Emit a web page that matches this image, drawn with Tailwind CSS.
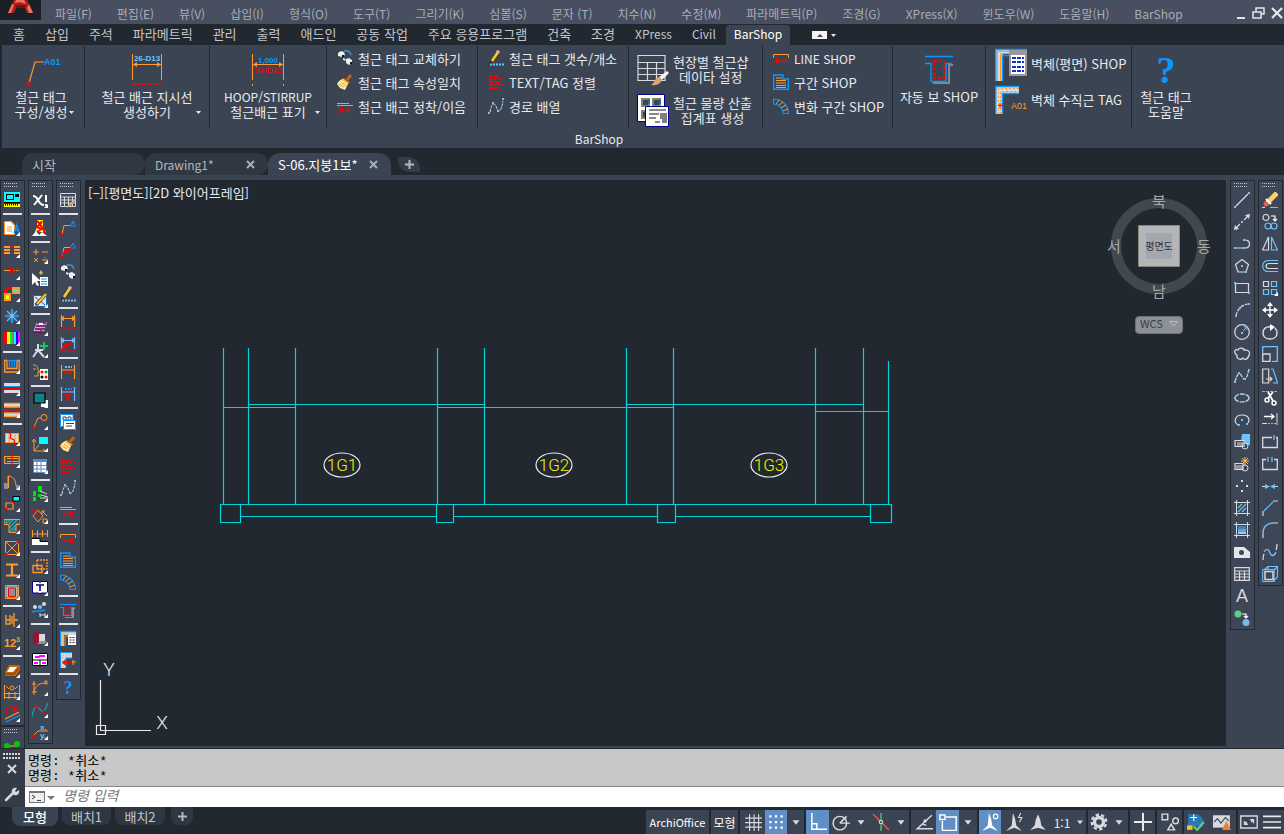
<!DOCTYPE html>
<html lang="ko">
<head>
    <meta charset="UTF-8">
    <meta name="viewport" content="width=device-width, initial-scale=1.0">
    <title>S-06.지붕1보 - BarShop</title>
    <script src="https://cdn.jsdelivr.net/npm/@tailwindcss/browser@4"></script>
</head>
<body class="h-screen flex flex-col overflow-hidden bg-[#3b4453] text-[13px] leading-[15px] text-[#e8eaed] font-['Noto_Sans_CJK_KR',sans-serif]">

    <!-- 메뉴 막대 -->
    <header class="flex h-6 shrink-0 items-start bg-[#474f60] text-[#a9adb5]">
        <a href="#" aria-label="AutoCAD" class="block h-5 w-[41px] shrink-0 bg-[#1b1f26]">
            <svg class="h-5 w-[41px]" viewBox="0 0 41 20">
                <path fill="#b3201c" d="M14 0h13l6 13h-6l-2-5h-9l-2 5H8z"/>
                <path fill="#f0705e" d="M12 4l2 1-3 8H8zM29 4l4 9h-4l-2-5zM16 0h8l2 4-6-2-5 1z"/>
                <path fill="#7a1110" d="M15 5h11l-1 3h-9z"/>
            </svg>
        </a>
        <nav id="menus" class="flex h-6 items-center gap-[25px] whitespace-nowrap pl-[14px] pt-[2px] text-[12px]"></nav>
        <div class="ml-auto flex h-6 items-center gap-[6px] pt-[2px]">
            <button aria-label="최소화"><svg width="10" height="12"><path fill="#e4e6ea" d="M1 10h8v2H1z"/></svg></button>
            <button aria-label="이전 크기로"><svg width="13" height="12"><path fill="none" stroke="#e4e6ea" stroke-width="1.500" d="M4 5V1h8v6H9M1 5h8v6H1z"/></svg></button>
            <button aria-label="닫기"><svg width="13" height="12"><path fill="none" stroke="#e4e6ea" stroke-width="2.200" d="M1 1l10 10M11 1L1 11"/></svg></button>
        </div>
    </header>

    <!-- 리본 탭 -->
    <nav id="ribbonTabs" class="flex h-[21px] shrink-0 items-end whitespace-nowrap bg-[#222830] pl-[3px] text-[#c3c6cc]"></nav>

    <!-- 리본 패널 -->
    <section class="h-[103px] shrink-0 border-l-2 border-[#222830] pt-px">
        <div class="flex h-[83px] whitespace-nowrap">
            <div class="flex w-[83px] justify-center border-r border-[#222830] pt-[7px]">
                <button class="flex flex-col items-center">
                    <svg width="36" height="34" class="mb-[2px]"><path fill="none" stroke="#ff9a2e" stroke-width="1.200" d="M4 30L10 9h9"/><circle cx="3.500" cy="31" r="1.800" fill="none" stroke="#f00" stroke-width="1.200"/><text x="19" y="12" font-size="9" font-weight="bold" fill="#0a96ff" font-family="Liberation Sans">A01</text></svg>
                    <span class="flex items-center pl-1"><span>철근 태그<br>구성/생성</span><span class="w-2 pl-[2px] pt-4"><svg width="5" height="3"><path fill="#e8eaed" d="M0 0h5L2.500 3z"/></svg></span></span>
                </button>
            </div>
            <div class="flex w-[125px] justify-center border-r border-[#222830] pt-[7px]">
                <button class="flex flex-col items-center">
                    <svg width="32" height="34" class="mb-[2px]"><path stroke="#ff9a2e" d="M1.500 1v26M30.500 1v26M2 11.500h28"/><path fill="#ff9a2e" d="M2 11.500l4-2.500v5zM30 11.500l-4-2.500v5z"/><path stroke="#f00" stroke-width="2" stroke-dasharray="2 1" d="M1 31h30"/><text x="16" y="8" text-anchor="middle" font-size="8" font-weight="bold" fill="#6ec3ff" font-family="Liberation Sans">26-D13</text></svg>
                    <span class="flex items-center pl-2"><span>철근 배근 지시선<br>생성하기</span><span class="w-2 pl-[3px] pt-4"><svg width="5" height="3"><path fill="#e8eaed" d="M0 0h5L2.500 3z"/></svg></span></span>
                </button>
            </div>
            <div class="flex w-[117px] justify-center border-r border-[#222830] pt-[7px]">
                <button class="flex flex-col items-center">
                    <svg width="34" height="34" class="mb-[2px]"><path stroke="#ff9a2e" d="M1.500 1v26M1.500 31v2M32.500 1v26M32.500 31v2M2 11.500h30"/><path fill="#ff9a2e" d="M2 11.500l4-2.500v5zM32 11.500l-4-2.500v5z"/><text x="17" y="10" text-anchor="middle" font-size="8" font-weight="bold" fill="#0a96ff" font-family="Liberation Sans">1,000</text><text x="17" y="20" text-anchor="middle" font-size="8" fill="#f00" font-family="Liberation Sans">3-HD13</text></svg>
                    <span class="flex items-center pl-2"><span><span class="text-[12px]">HOOP/STIRRUP</span><br>철근배근 표기</span><span class="w-2 pl-[3px] pt-4"><svg width="5" height="3"><path fill="#e8eaed" d="M0 0h5L2.500 3z"/></svg></span></span>
                </button>
            </div>
            <div data-rows="a" class="w-[151px] border-r border-[#222830] pl-[10px]"></div>
            <div data-rows="b" class="w-[151px] border-r border-[#222830] pl-[10px]"></div>
            <div class="w-[134px] border-r border-[#222830] pl-[8px] pt-[2px]">
                <button class="flex h-[41px] items-center gap-1">
                    <svg width="32" height="34"><path fill="none" stroke="#d8dadd" stroke-width="1.200" d="M1 3.500h27v25H1zM1 10.500h27M1 16.500h27M1 22.500h27M10.500 10.500v18M19.500 10.500v18"/><path fill="#f4f4f4" d="M30 19l2 2-7 7-3-3z"/><path fill="#d9a56b" d="M22 25l3 3c-2 5-8 6-11 5 4-2 3-7 8-8z"/></svg>
                    <span>현장별 철근샵<br>데이타 설정</span>
                </button>
                <button class="flex h-[41px] items-center gap-1">
                    <svg width="32" height="34"><path fill="#fff" stroke="#00008c" d="M.5 1.500h27v27H.500z"/><path fill="#808080" d="M4 5h9v9H4zM15 5h9v9h-9zM4 17h9v9H4z"/><path fill="#3b4453" d="M6 7h5v5H6zM17 7h5v5h-5zM6 19h5v5H6z"/><path fill="#0a8080" d="M11 6h2v5h-2zM22 6h2v5h-2z"/><path fill="#fff" stroke="#00008c" d="M8.500 13.500h23v20h-23z"/><path stroke="#888" stroke-width="2" d="M12 17h17M12 21h10M12 25h7M18 29h5"/><path fill="#808080" d="M23 20h7v10h-5v-4h-2z"/></svg>
                    <span>철근 물량 산출<br>집계표 생성</span>
                </button>
            </div>
            <div data-rows="c" class="w-[130px] border-r border-[#222830] pl-[10px]"></div>
            <div class="flex w-[93px] justify-center border-r border-[#222830] pt-[7px]">
                <button class="flex flex-col items-center self-start">
                    <svg width="30" height="34" class="mb-[2px]"><path fill="none" stroke="#888" stroke-width="2" d="M29 12h-4v18H9"/><path fill="none" stroke="#0a96ff" stroke-width="1.300" d="M1 3.500h28M1 10.500h6v18h15v-18h6"/><path fill="none" stroke="#f00" stroke-width="2" stroke-dasharray="3 2" d="M10 8h10v17H10z"/></svg>
                    <span>자동 보 SHOP</span>
                </button>
            </div>
            <div class="w-[146px] border-r border-[#222830] pl-[9px]">
                <button class="flex h-[35px] items-center gap-1">
                    <svg width="32" height="34"><path fill="#d8dadd" d="M0 2h32v5H8v27H0z"/><path fill="none" stroke="#0a96ff" stroke-width="1.500" d="M.700 34V2.500H32M7.500 34V8.500h8"/><path fill="none" stroke="#ff9a2e" d="M2.500 34V4.500h12M5.500 34V6.500h9"/><path fill="#fff" stroke="#999" stroke-width="2" d="M15 5h16v23H15z"/><path fill="#999" d="M14 3h18v5H14z"/><path stroke="#1030d0" stroke-width="2" stroke-dasharray="4 1" d="M17 11h12M17 15h12M17 20h12M17 24h12"/></svg>
                    <span>벽체(평면) SHOP</span>
                </button>
                <button class="flex h-[37px] items-center gap-1">
                    <svg width="32" height="30"><path fill="#d8dadd" d="M0 1h24v7H8v21H0z"/><path fill="none" stroke="#0a96ff" stroke-width="1.500" d="M.700 29V1.500H24M7.500 29V8.500H24"/><path fill="none" stroke="#ff9a2e" stroke-dasharray="2 2" d="M3.500 29V3.500H24M5.500 29V6.500H24"/><path fill="none" stroke="#f00" d="M3 20.500h13M5 18v5M8 18v5"/><text x="16" y="24" font-size="9" fill="#ff9a2e" font-family="Liberation Sans">A01</text></svg>
                    <span>벽체 수직근 TAG</span>
                </button>
            </div>
            <div class="flex w-[68px] justify-center pt-[7px]">
                <button class="flex flex-col items-center self-start">
                    <svg width="30" height="34" class="mb-[2px]"><text x="15" y="30" text-anchor="middle" font-size="38" font-weight="bold" fill="#0a96ff" font-family="Liberation Serif">?</text></svg>
                    <span>철근 태그<br>도움말</span>
                </button>
            </div>
        </div>
        <p class="w-[1194px] pt-[2px] text-center text-[12px]">BarShop</p>
    </section>

    <!-- 파일 탭 -->
    <nav class="flex h-[27px] shrink-0 items-end bg-[#222830] pl-[22px] text-[#b4b8bf]">
        <a href="#" class="flex h-[22px] w-[123px] items-center rounded-t-xl rounded-br-xl bg-[#2f3743] pl-[10px]">시작</a>
        <a href="#" class="flex h-[22px] w-[123px] items-center justify-between rounded-t-xl rounded-br-xl bg-[#2f3743] pl-[10px] pr-[13px] text-[12px]">Drawing1*
            <svg width="9" height="9"><path stroke="#a9adb5" stroke-width="2" d="M1 1l7 7M8 1L1 8"/></svg></a>
        <a href="#" class="flex h-[22px] w-[123px] items-center justify-between rounded-t-xl bg-[#3b4453] pl-[10px] pr-[13px] text-white">S-06.지붕1보*
            <svg width="9" height="9"><path stroke="#a9adb5" stroke-width="2" d="M1 1l7 7M8 1L1 8"/></svg></a>
        <button aria-label="새 도면" class="mb-[3px] ml-[7px] flex h-[15px] w-[22px] items-center justify-center rounded-tr-xl rounded-bl-xl bg-[#343c49]"><svg width="9" height="9"><path stroke="#b4b8bf" stroke-width="2" d="M4.500 0v9M0 4.500h9"/></svg></button>
    </nav>

    <!-- 작업 영역 -->
    <main class="flex min-h-0 flex-1 overflow-hidden pt-[5px] pb-[2px]">
        <div class="flex shrink-0 items-start gap-[3px] pr-1">
            <div>
                <div data-bar="l1" class="w-[25px] border border-[#222830] bg-[#3e4757]"></div>
                <div data-bar="l1b" class="w-[25px] border border-[#222830] bg-[#3e4757]"></div>
            </div>
            <div data-bar="l2" class="w-[25px] border border-[#222830] bg-[#3e4757]"></div>
            <div data-bar="l3" class="w-[25px] border border-[#222830] bg-[#3e4757]"></div>
        </div>

        <div class="relative min-w-0 flex-1 overflow-hidden bg-[#222830]">
            <p class="px-[3px] pt-[5px]">[−][평면도][2D 와이어프레임]</p>

            <svg class="absolute top-0 left-0 h-full w-full" aria-label="평면도">
                <g fill="none" stroke="#00d5dc" stroke-width="1.200">
                    <path d="M138.500 168v156M163.500 168v156M210.500 168v156M352.500 168v156M399.500 168v156M541.500 168v156M588.500 168v156M730.500 168v156M778.500 168v156M803.500 181v143"/>
                    <path d="M138 227.500h73M163 224.500h237M352 227.500h237M541 224.500h238M730 231.500h74"/>
                    <path d="M135 324.500h672M156 336.500h195M369 336.500h203M590 336.500h195"/>
                    <path d="M135.500 324.500h20v18h-20zM351.500 324.500h17v18h-17zM572.500 324.500h18v18h-18zM785.500 324.500h21v18h-21z"/>
                </g>
                <g fill="none" stroke="#e8eaed" stroke-width="1.200">
                    <ellipse cx="257" cy="285" rx="18" ry="12"/>
                    <ellipse cx="469" cy="285" rx="18" ry="12"/>
                    <ellipse cx="684" cy="285" rx="18" ry="12"/>
                </g>
                <g fill="#f4f400" font-size="17" font-weight="300" text-anchor="middle" font-family="Roboto">
                    <text x="257" y="291">1G1</text>
                    <text x="469" y="291">1G2</text>
                    <text x="684" y="291">1G3</text>
                </g>
            </svg>

            <!-- 뷰큐브 -->
            <div class="absolute top-[10px] right-[14px] flex flex-col items-center">
                <svg width="106" height="116">
                    <circle cx="53" cy="56" r="43" fill="none" stroke="#43484f" stroke-width="10"/>
                    <path fill="#b4b5b7" stroke="#8a8678" d="M32.500 35.500h41v41h-41z"/>
                    <path fill="#a3a7b0" d="M40 43h26v26H40z"/>
                    <text x="53" y="60" text-anchor="middle" font-size="10" fill="#33373d">평면도</text>
                    <g fill="#a6a8ab" font-size="15" text-anchor="middle"><text x="53" y="17">북</text><text x="8" y="62">서</text><text x="98" y="62">동</text><text x="53" y="107">남</text></g>
                </svg>
                <button class="mt-[10px] flex h-[18px] w-12 items-center justify-between rounded border border-[#6d7179] bg-[#8c9099] px-1 pb-[3px] text-[11px] text-[#3c4048]">WCS
                    <svg width="9" height="6"><path fill="none" stroke="#b8bcc4" d="M.5 .5h8L4.500 5z"/></svg></button>
            </div>

            <!-- UCS 아이콘 -->
            <svg class="absolute bottom-[6px] left-2" width="80" height="84">
                <path fill="none" stroke="#e8eaed" stroke-width="1.200" d="M7.500 24v50.500H58M3.500 69.500h9v9h-9z"/>
                <g fill="#e8eaed" font-size="19" font-weight="300" font-family="Roboto" text-anchor="middle"><text x="16" y="20">Y</text><text x="69" y="73">X</text></g>
            </svg>
        </div>

        <div class="flex shrink-0 items-start gap-[3px] pr-px pl-1">
            <div data-bar="r1" class="w-[25px] border border-[#222830] bg-[#3e4757]"></div>
            <div data-bar="r2" class="w-[25px] border border-[#222830] bg-[#3e4757]"></div>
        </div>
    </main>

    <!-- 명령행 -->
    <section class="flex h-[59px] shrink-0 border-t border-[#222830]">
        <div class="flex w-[25px] shrink-0 flex-col items-center bg-[#343b47] pt-1 pr-[2px]">
            <svg width="18" height="6"><path stroke="#d8dadd" stroke-width="2" stroke-dasharray="2 1" d="M0 1h18M0 5h18"/></svg>
            <button aria-label="명령행 닫기" class="mt-[5px]"><svg width="10" height="10"><path stroke="#d8dadd" stroke-width="2" d="M1 1l8 8M9 1L1 9"/></svg></button>
            <button aria-label="사용자화" class="mt-3"><svg width="16" height="16"><path stroke="#d8dadd" stroke-width="2.500" stroke-linecap="round" d="M2 14l7-7"/><path fill="#d8dadd" d="M8 7c-1-3 1-6 5-5l-2 3 1 1 3-2c1 4-2 6-5 5z"/></svg></button>
        </div>
        <div class="flex min-w-0 flex-1 flex-col">
            <div class="h-[37px] bg-[#c8c8c8] pt-[5px] pl-[3px] text-black font-['Liberation_Mono','Noto_Sans_CJK_KR',monospace]">
                <p>명령: *취소*</p>
                <p>명령: *취소*</p>
            </div>
            <div class="flex h-[21px] items-center border-t border-[#888] bg-white pl-1">
                <svg width="30" height="14"><path fill="#eee" stroke="#777" d="M.5 1.500h15v11H.500z"/><path fill="#777" d="M0 1h16v2H0zM18 6h8l-4 4z"/><path fill="none" stroke="#444" d="M3 5l3 2-3 2M8 10.500h4"/></svg>
                <label for="cmd" class="sr-only">명령</label>
                <input id="cmd" type="text" placeholder="명령 입력" class="mb-1 h-4 flex-1 pl-1 text-[14px] text-black italic outline-none placeholder:text-[#777]">
            </div>
        </div>
    </section>

    <!-- 상태 막대 -->
    <footer class="flex h-[27px] shrink-0 items-start justify-between bg-[#222830]">
        <nav class="flex pl-3 text-[#c3c6cc]">
            <a href="#" class="flex h-[19px] w-[46px] items-center justify-center rounded-b-lg bg-[#3b4453] font-medium text-white">모형</a>
            <a href="#" class="ml-1 flex h-[18px] w-[49px] items-center justify-center rounded-b-lg bg-[#2f3743]">배치1</a>
            <a href="#" class="ml-1 flex h-[18px] w-[50px] items-center justify-center rounded-b-lg bg-[#2f3743]">배치2</a>
            <button aria-label="새 배치" class="ml-[6px] flex h-[18px] w-[22px] items-center justify-center rounded-b-lg bg-[#2f3743]"><svg width="9" height="9"><path stroke="#b4b8bf" stroke-width="2" d="M4.500 0v9M0 4.500h9"/></svg></button>
        </nav>
        <div id="status" class="flex h-[27px] items-stretch gap-[2px] pt-[3px] text-[12px]"></div>
    </footer>

<script>
const O = '#ff9a2e', B = '#0a96ff', L = '#6ec3ff', R = '#f00', W = '#d8dadd', G = '#8d9096';
const s = (c, d, w = 1) => `<path fill="none" stroke="${c}" stroke-width="${w}" d="${d}"/>`;
const f = (c, d) => `<path fill="${c}" d="${d}"/>`;
const dash = (c, d, w = 1, p = '2 1') => `<path fill="none" stroke="${c}" stroke-width="${w}" stroke-dasharray="${p}" d="${d}"/>`;
const c = (col, x, y, r, w = 1) => `<circle cx="${x}" cy="${y}" r="${r}" fill="none" stroke="${col}" stroke-width="${w}"/>`;
const dot = (col, x, y, r = 1.5) => `<circle cx="${x}" cy="${y}" r="${r}" fill="${col}"/>`;
const t = (col, x, y, size, str) => `<text x="${x}" y="${y}" font-size="${size}" font-weight="bold" fill="${col}" font-family="Liberation Sans">${str}</text>`;
const FLY = f('#fff', 'M16 12v4h-4z');
const svg = (body, n = 16) => `<svg width="${n}" height="${n}" viewBox="0 0 16 16">${body}</svg>`;

// shared glyphs
const swap = f('#e8f0f4', 'M1 3l3-2 3 1 1 3-3 2-4-1zM9 9l3-1 3 2v3l-3 2-3-2z') + f('#111', 'M5 5h2v2H5zM13 12h2v2h-2z') + s('#4a90c8', 'M7 1c4-1 6 1 7 4', 1.5) + f(W, 'M6 8l3 1-1 2-2-1z');
const pencil = s('#5a4010', 'M4 12L11 1', 4) + s('#f5c838', 'M4 11L10 2', 2.5) + f('#f0a0a0', 'M9 0l3 1-1 3-3-2z') + f('#222', 'M2 11l2 2-3 2z') + dash(L, 'M2 14.5h14', 2);
const brush = s('#c06010', 'M10 6l4-5', 3) + f('#ffe9a0', 'M2 7l5-3 5 4-4 8-5-2-3-4z') + s(O, 'M4 8l5 4M2 10l5 3M6 6l5 4') + s('#b05800', 'M6 4l7 5', 1.5);
const anchor = s(O, 'M0 5.500h12M0 7.500h16') + s(R, 'M3.500 9v6M12.500 9v6M4 12h8M6 10l-2 2 2 2M10 10l2 2-2 2');
const bricks = dash(R, 'M1 2h10', 2, '4 1') + dash(R, 'M1 5h14', 2, '3 1') + dash(R, 'M1 8h12', 2, '5 1') + dash(R, 'M1 11h14', 2, '3 1') + dash(R, 'M1 14h10', 2, '4 1');
const path = dash(W, 'M2 14c1-5 2-8 4-8s3 7 5 7 3-5 4-10', 1, '3 1') + f(L, 'M0 14h2v2H0zM4 4h2v2H4zM9 12h2v2H9zM14 0h2v2h-2z');
const lineShop = s(O, 'M.5 8V4.500h15V8') + s(R, 'M3.500 8v6M12.500 8v6M4 11h8M6 9l-2 2 2 2M10 9l2 2-2 2');
const zone = s(B, 'M.7 1h9.300v4h5.300v10.300H.700z', 1.400) + s(O, 'M3 4h6M3 6.500h10M3 9h10M3 11.500h10M3 13.500h10');
const curve = s(B, 'M.5 6V1C9 1 15 7 15.500 15.500H10C10 10 6 6 .5 6z', 1.200) + s(O, 'M3 6l3-4M6 7l4-3M8 10l5-3M10 13l5-2');
const grid = s(W, 'M.5 1.500h15v13H.500zM.5 5h15M.5 8h15M.5 11h15M4.500 5v9M8.500 5v9M12.500 5v9');
const brushTip = f('#d9a56b', 'M10 11l5-4 1 1-4 5-5 3z');
const leaderA = s(O, 'M2 14L4 5.500h6') + c(R, 1.500, 14.5, 1) + s(B, 'M10 6h6M11 5l2-4 2 4M12 3h2');
const bolt = s(R, 'M2 13l4-5 1 2 5-4', 2);
const dimA = col => s(col, 'M1.500 1v12M14.500 1v12M2 4.500h12M4 2.500L2 4.500l2 2M12 2.500l2 2-2 2', 1.2) + dash(R, 'M1 15h14', 1.500, '2 1');
const beam = s(G, 'M15 6h-2v10H5', 2) + s(B, 'M0 2.500h16M0 5.500h3.500v8h8v-8H15', 1.200) + dash(R, 'M5 5h5v7H5z', 1.300);
const wall = f(W, 'M0 1h16v4H4v11H0z') + s(B, 'M.5 16V1.500H16', 1.500) + s(O, 'M3 16V4h6M5 16V6h4') + f('#fff', 'M8 5h8v10H8z') + dash('#333', 'M9.500 7.500h5M9.500 10h5M9.500 12.500h5', 1, '2 1');
const wallTag = f(W, 'M0 0h12v6H6v10H0z') + s(B, 'M.5 16V.500H12M6 16V6h6', 1.200) + dash(O, 'M3 15V3h8', 1, '1 2') + s(R, 'M3 10.500h9M6 8l-3 2.500L6 13', 1.500) + s(O, 'M12 10h4M13 8v5');
const help = `<text x="8" y="14" text-anchor="middle" font-size="18" font-weight="bold" fill="${B}" font-family="Liberation Serif">?</text>`;
const table2 = f('#fff', 'M0 0h13v13H0z') + s('#345', 'M3 3h3v3H3zM8 3h3v3H8z') + s(B, 'M.5 .5h12.500v12H.500z') + f('#fff', 'M4 7h12v9H4z') + s('#345', 'M6 9.500h8M6 12h6') + s(B, 'M3.500 6.500h12v9h-12z');

const rows = {
    a: [['철근 태그 교체하기', swap], ['철근 태그 속성일치', brush], ['철근 배근 정착/이음', anchor]],
    b: [['철근 태그 갯수/개소', pencil], ['TEXT/TAG 정렬', bricks], ['경로 배열', path]],
    c: [['LINE SHOP', lineShop], ['구간 SHOP', zone], ['변화 구간 SHOP', curve]]
};

// '-' is a separator; a trailing 1 adds the flyout corner
const bars = {
    l1: [
        ['도면 설정', f('#0ff', 'M0 0h16v10H0z') + f('#000', 'M2 2h8v6H2zM11 2h4v3h-4zM0 10h16v1H0z') + f('#0ff', 'M3 3h6v4H3z') + f('#ff0', 'M0 12h16v3H0z') + dash('#000', 'M1 12.500h14', 2, '1 1')], '-',
        ['문서', f('#fff', 'M1 2h6l3 3v9H1z') + s(O, 'M.5 1.500h7l3 3v10h-10zM3 7h5M3 9h5M3 11h5') + s(B, 'M10 13l2.500-8 2.500 8M11 10h4', 1.500), 1],
        ['끊기', s(O, 'M0 5h6M0 8h6M0 11h6M10 5h6M10 8h6M10 11h6', 2) + s(R, 'M6 4h4M6 3l2 2M10 3l-2 2'), 1],
        ['선 분할', s(O, 'M0 6.500h6') + s(R, 'M6 6.500h4M6 4l3 5M9 4L6 9') + dash(O, 'M10 6.500h6', 1, '1 1'), 1],
        ['복사 변경', f('#ff0', 'M1 8h5v6H1z') + f('#0ff', 'M10 2h5v5h-5z') + s(O, 'M1 8h5v6H1zM9 2h6v5H9z', 2) + s(R, 'M2 5c1-3 4-4 6-3', 2) + f(R, 'M0 3h4v4H0z'), 1],
        ['동결', s(L, 'M8 1v14M1 8h14M3 3l10 10M13 3L3 13', 1.200) + c(B, 8, 8, 4.5), 1],
        ['색상', f(R, 'M0 2h3v12H0z') + f('#ff0', 'M3 2h3v12H3z') + f('#0f0', 'M6 2h2v12H6z') + f('#808080', 'M8 2h2v12H8z') + f('#0ff', 'M10 2h2v12h-2z') + f('#00f', 'M12 2h2v12h-2z') + f('#f0f', 'M14 2h2v12h-2z'), 1], '-',
        ['커튼월', s(O, 'M3 2.500H.700v11.500h14.500V2.500H13v8H3z', 1.300) + s(B, 'M5.500 2v8M8 2v8M10.500 2v8M3 2.500h10', 1.200), 1],
        ['벽체', f(W, 'M0 3h16v3H0zM0 10h16v3H0z') + s(B, 'M0 6.500h16') + dash(R, 'M0 8.500h16', 1.500, '3 1'), 1],
        ['단열 벽체', f(W, 'M0 2h16v3H0zM0 11h16v3H0z') + s(O, 'M0 1.500h16M0 5h16M0 11h16M0 14.500h16', 1.3) + dash(R, 'M0 8h16', 1, '2 1') + dot(R, 2, 8) + dot(R, 14, 8), 1], '-',
        ['벽 절단', f(W, 'M1 4h14v8H1z') + s(O, 'M1 3.500h14M1 12.500h14M1.500 4v8M5 4v8M11 4v8M14.500 4v8') + s(R, 'M4 0l3 5-1 3 4 2 1 6', 1.200), 1],
        ['창', s(O, 'M.7 4.500h14.500v7H.700zM3 6.500h11M3 9.500h11', 1.200) + s(R, 'M8 0v16'), 1],
        ['문', s(O, 'M4 13V2c5 0 8 4 8 10') + f(G, 'M0 9h4v6H0zM12 11h4v4h-4z') + s(O, 'M4.500 2v12'), 1],
        ['객체 연결', s(O, 'M2 7h7v6H2z', 1.200) + f('#0ff', 'M9 1h7v4H9z') + s('#000', 'M9 .5h6.500v4.500H9z') + dot(R, 2, 13) + s(R, 'M8 6l3 2', 1.500), 1],
        ['T형 벽', s('#20b8b8', 'M0 5l4-4M1 7l6-6M5 6l5-5M5 10l8-8M5 14l9-9M8 14l4-4', 1.200) + s(O, 'M0 1.500h16v5h-4v8H5v-8H0z'), 1],
        ['개구부', s(O, 'M1.500 1.500h13v13h-13zM1.500 1.500l13 13M14.500 1.500l-13 13') + dot(R, 14, 2) + dot(R, 2, 14), 1],
        ['철골', s(O, 'M2 2.500h12M2 13.500h12M8 3v10', 2.200), 1],
        ['기둥', f(G, 'M3 3h10v10H3z') + s(O, 'M1.500 1.500h13v13h-13z') + s(W, 'M3 3h10v10H3z') + s(R, 'M4.500 4h7v8.500h-7z'), 1], '-',
        ['문자 정렬', s(O, 'M2 3v9h4V3M2 8h4M10 1v14M10 8h4M8 4v8', 1.300), 1],
        ['번호', t(O, 0, 13, 11, '12') + t(O, 12, 8, 7, '3'), 1], '-',
        ['가구', f('#c86400', 'M5 3h11v5l-4 6H1v-4z') + f('#fff', 'M6 5h7l-4 5H3z') + s('#7a3c00', 'M1 12h9l5-6'), 1],
        ['난간', s(O, 'M.5 1v14M15.500 1v14M1 9.500h14M1 13.500h14M5 8v7M11 8v7M2 2l3 3M14 2l-3 3') + c(O, 8, 4, 2), 1],
        ['회전 복사', s(O, 'M1 13L15 6', 1.300) + s(B, 'M2 16l14-7', 1.300) + s(R, 'M3 7c-4-5 6-9 9-3M12 0v5H7', 1.300), 1]
    ],
    l1b: [['조경', s(O, 'M2 8h12') + dot('#0c0', 3, 8, 3) + dot('#0c0', 13, 6, 3)]],
    l2: [
        ['분해', s('#fff', 'M1 4c3 0 4 2 5 4s3 5 6 5M2 13L10 3', 2) + f('#fff', 'M13 3h2v7h-2zM13 12h2v2h-2z'), 1], '-',
        ['불꽃', f('#ff0', 'M5 0h6v7l3 5H3l2-5z') + s(R, 'M5 1l3 3-3 3 4 2-5 4M10 1L8 5l3 3 2 5', 2) + f('#fff', 'M0 16l4-5 3 4 3-3 5 4z')], '-',
        ['계산', s(O, 'M4 1v6M1 4h6M10 4h6M2 10l4 4M6 10l-4 4M10 12h6M13 9v1M13 14v1'), 1],
        ['빠른 선택', f('#e0b040', 'M9 0l2 3-2 2-2-2z') + f('#fff', 'M8 7h8v9H8z') + s(B, 'M9 9h6M9 11.500h6M9 14h6') + f('#fff', 'M0 3v12l3-3 2 4 2-1-2-4h4z')],
        ['블럭 편집', f('#d8e8f8', 'M1 3h14v12H1z') + s('#2060a0', 'M1.500 3.500h13v11h-13zM3 5l10 8M3 13l6-5') + s('#5a4010', 'M4 13L14 2', 3.500) + s('#f5c838', 'M5 12l9-10', 2), 1], '-',
        ['인쇄', f('#c8a8d0', 'M5 2h10l-3 10H1z') + s('#5a1060', 'M5 3h9M4 6h10M3 9h10M1 12h11', 1.300) + f('#fff', 'M7 3h4v2H7z') + dot(R, 9, 10.5, 1), 1],
        ['추가', s(W, 'M6 2v6L1 15M6 8l6 7M3 8h8', 2) + s('#20c060', 'M12 0v8M8 4h8', 2), 1],
        ['배치 확인', s(O, 'M1 1c4 0 5 2 5 5l2 2H6v4H2M1 5h3') + f('#fff', 'M8 5h8v11H8z') + dot(R, 10, 8) + dot('#090', 14, 8) + dot('#000', 10, 13) + dot(R, 14, 13)], '-',
        ['순서', f('#fff', 'M9 8h7v7H9z') + f('#128080', 'M2 1h11v10H2z') + s('#000', 'M2 1h11v10H2z', 1.200), 1],
        ['지시선', c(O, 12, 3.5, 3) + s(O, 'M9 4H6L2 13') + f(R, 'M0 12l4 1-2 3z'), 1],
        ['좌표', f('#0ff', 'M7 1h9v7H7z') + s(O, 'M2 4v11h11M0 6l2-3 2 3M11 13l3 2-3 2M2 15l5-6'), 1],
        ['표', f('#fff', 'M1 2h14v12H1z') + f('#5a88c8', 'M1 1h14v3H1z') + s('#6a8ab8', 'M1 7.500h14M1 11h14M5 4v10M9 4v10M1.500 2v12.500h13V2'), 1], '-',
        ['보행', f('#00e010', 'M1 5h3v5H1zM1 11h3v4H1zM6 0h4v6H6zM6 8h3v3H6z') + s(W, 'M8 5l7 3M9 9l7 2M8 12h7', 1), 1],
        ['회전', s(O, 'M6 2l5 6-5 6-5-6zM10 3l5 5M10 3h3M10 3v3') + dash(R, 'M1 2h5v5H1z') + s(O, 'M11 11h4v4h-4z'), 1],
        ['연속 치수', s(O, 'M.5 0v7M5.500 0v7M10.500 0v7M15.500 0v7M0 4h16') + f('#fff', 'M0 9h8v3h8v3H0z') + s('#000', 'M0 8.500h8v3h8')], '-',
        ['모듈', s(O, 'M1 7.500h9v7H1z', 1.300) + dash(O, 'M5 2h10v9M5 2v9h10', 1.300, '2 1') + s(O, 'M4 11h4'), 1],
        ['문자', f('#fff', 'M0 2h7l1 1 1-1h7v11H9l-1 1-1-1H0z') + s('#00008c', 'M.5 1.500H7l1 1 1-1h6.500V13H9l-1 1-1-1H.500z') + s('#00008c', 'M4 5h8M8 5v6', 1.500), 1],
        ['구름 높이', dot(W, 3, 5, 2) + dot(L, 8, 5, 2) + dot(W, 12, 2, 2) + s(B, 'M0 10c4-2 8 0 13-2', 1.500) + s(W, 'M8 11v4M13 11v4M8 13h5'), 1], '-',
        ['종료', f('#a01030', 'M1 3l6-2v12l-6 2z') + f(W, 'M7 4h6v8H7z') + f(G, 'M5 14l4-3h6l-2 3z'), 1],
        ['패턴', f('#fff', 'M0 1h16v13H0z') + s('#000', 'M.5 1.500h15v12H.500zM0 8h16M8 8v6') + s('#f0f', 'M3 5h4l1-1h5M2 11h4M10 11h4', 1.800)], '-',
        ['기울기', s(O, 'M2 1v14M0 4h4M0 12h5M2 12c1-6 5-9 11-9') + s(O, 'M13 1h2v3h-2z'), 1],
        ['폴리선', s('#20a0a0', 'M0 15c1-8 3-10 5-10s4 5 7 5l4-9', 1.200) + dot(R, 5, 5) + dot(R, 12, 10), 1],
        ['XY 좌표', s(O, 'M1 12l5-5h10') + dot(R, 1.5, 12) + t(L, 8, 6, 8, 'x.') + t(L, 8, 14, 8, 'y.'), 1]
    ],
    l3: [
        ['데이타 설정', grid + brushTip], '-',
        ['태그', leaderA],
        ['태그 수정', s(L, 'M2 14L4 5.500h6') + c(R, 1.5, 14.5, 1) + s(B, 'M10 6h6M11 5l2-4 2 4') + bolt],
        ['태그 교체', swap], ['갯수', pencil], '-',
        ['배근 지시선', dimA(O)], ['지시선 수정', dimA(L) + bolt], '-',
        ['HOOP 표기', s(O, 'M1.500 1v14M14.500 1v14M2 6h12', 1.2) + dash(L, 'M5 3h7', 2, '2 1') + dash(R, 'M4 9h9', 2, '2 1')],
        ['HOOP 수정', s(L, 'M1.500 1v14M14.500 1v14M2 6h12', 1.2) + dash(B, 'M5 3h7', 2, '2 1') + s(R, 'M4 9h8M8 8v6M6 11l2 3 2-3', 1.300)], '-',
        ['집계표', table2], ['속성일치', brush], ['정렬', bricks], ['경로 배열', path], ['정착', anchor], '-',
        ['LINE SHOP', lineShop], ['구간 SHOP', zone], ['변화 구간', curve], '-',
        ['자동 보', beam], '-',
        ['벽체 SHOP', wall], ['벽체 TAG', wallTag], '-',
        ['도움말', help]
    ],
    r1: [
        ['선', s(W, 'M2 14L14 2', 1.200) + f(L, 'M0 14h2v2H0zM14 0h2v2h-2z')],
        ['구성선', s(W, 'M3 13l3-3M10 6l3-3', 1.200) + f(W, 'M0 16l1-5 4 4zM16 0l-5 1 4 4z') + f(L, 'M7 7h2v2H7z')],
        ['폴리선', s(W, 'M2 12h7M11 12c6 0 6-8 0-8', 1.2) + f(L, 'M0 11h2v2H0zM9 3h2v2H9zM9 11h2v2H9z')],
        ['폴리곤', s(W, 'M8 1.500l6.500 5L12 14H4L1.500 6.500z', 1.200) + f(L, 'M7 7h2v2H7zM11 13h2v2h-2z')],
        ['직사각형', s(W, 'M1.500 3.500h13v9h-13z', 1.200) + f(L, 'M0 2h2v2H0zM14 12h2v2h-2z')],
        ['호', dash(W, 'M2 14C3 8 7 3 14 2', 1.200, '4 1') + f(L, 'M1 13h2v2H1zM5 5h2v2H5zM14 1h2v2h-2z')],
        ['원', c(W, 8, 8, 7.300, 1.200) + f(L, 'M7 8h2v2H7z') + s(L, 'M9 7l4-4M10 3h3v3')],
        ['구름형 수정 기호', s(W, 'M3 9C-1 7 1 2 4 4c1-3 6-2 6 0 4-1 7 3 5 5-1 5-5 5-6 3-3 3-7 0-6-3z', 1.300)],
        ['스플라인', dash(W, 'M1 14c2-8 4-10 6-7s3 6 5 3 2-6 3-9', 1.200, '4 1') + f(L, 'M0 13h2v2H0zM4 4h2v2H4zM10 10h2v2h-2zM14 1h2v2h-2z')],
        ['타원', `<ellipse cx="8" cy="8" rx="7" ry="4" fill="none" stroke="${W}" stroke-width="1.2" stroke-dasharray="5 1"/>` + f(L, 'M0 7h2v2H0zM14 7h2v2h-2zM7 3h2v2H7z')],
        ['타원형 호', s(W, 'M4 13C-1 10 1 3 8 3s8 5 6 8', 1.200) + f(L, 'M7 7h2v2H7zM4 12h2v2H4zM12 11h2v2h-2z')],
        ['블럭 삽입', f(L, 'M8 0h8v11h-3l-2-3-4-1z') + f('#3e4757', 'M1 6h9v7H1z') + s(W, 'M1 6.500h9v6H1z', 1.200) + f(G, 'M3 8h7v4H3z') + c(W, 11, 12, 3)],
        ['블럭 작성', s('#ffc040', 'M11 1v8M7 5h8M8 2l6 6M14 2L8 8') + s(W, 'M1 7.500h8v6H1z', 1.200) + f(G, 'M2 9h7v4H2z') + c(W, 11, 12, 3)],
        ['점', f(W, 'M7 2h2v2H7zM2 7h2v2H2zM12 7h2v2h-2zM7 12h2v2H7z')],
        ['해치', s(W, 'M2.500 0v16M13.500 0v16M0 2.500h16M0 13.500h16') + s(L, 'M4 8l4-4M4 12l8-8M8 12l4-4', 1.200)],
        ['그라데이션', s(W, 'M2.500 0v16M13.500 0v16M0 2.500h16M0 13.500h16') + f('#3f82bc', 'M4 4h8v3H4z') + f('#66a4d8', 'M4 7h8v3H4z') + f('#9accf2', 'M4 10h8v2H4z')],
        ['영역', '<path fill="#e4e6ea" fill-rule="evenodd" d="M0 3h10l6 5v6H0zM7.500 6a2.500 2.500 0 100 5 2.500 2.500 0 000-5z"/>'],
        ['테이블', s(W, 'M.7 1.700h14.600v12.600H.700zM1 5h14M1 8h14M1 11h14M5.500 5v9M10.500 5v9', 1.200)],
        ['문자', `<text x="8" y="14" text-anchor="middle" font-size="18" fill="${W}" font-family="Liberation Sans">A</text>`],
        ['레이어 변환', dot('#5fd080', 4, 4, 3.500) + dot('#7ab8ea', 12, 12.5, 3.500) + s('#fff', 'M8 4h4v4M10 6l2 2 2-2', 1.200)]
    ],
    r2: [
        ['지우기', s('#f8d070', 'M5 11L15 1', 5) + dot('#f05858', 4, 12, 2.500) + s('#fff', 'M4 7l5 5', 2) + s(L, 'M8 15.500h8') + s(W, 'M0 15.500h3')],
        ['복사', c(W, 4, 3.5, 3, 1.200) + c(L, 6, 12, 3, 1.200) + c(L, 12, 12, 3, 1.200) + s('#fff', 'M9 2h4v5M11 5l2 2 2-2', 1.200)],
        ['대칭', s(W, 'M6.500 1v13h-6z', 1.200) + s(L, 'M9.500 1v13h6z', 1.200)],
        ['간격띄우기', s(L, 'M16 2.500H6c-7 0-7 11 0 11h10', 1.200) + s(W, 'M16 5.500H7c-4 0-4 5 0 5h9', 1.200)],
        ['배열', s(W, 'M1.500 1.500h5v5h-5z', 1.200) + s(L, 'M9.500 1.500h5v5h-5zM1.500 9.500h5v5h-5zM9.500 9.500h5v5h-5z', 1.200), 1],
        ['이동', s('#fff', 'M8 2v12M2 8h12', 1.300) + f('#fff', 'M8 0l3 4H5zM8 16l3-4H5zM0 8l4-3v6zM16 8l-4-3v6z')],
        ['회전', s(W, 'M9 3C4 2 1 5 1 9c0 8 14 8 14 0 0-2-1-4-2-5', 1.500) + f('#fff', 'M8 0l5 3-5 4z')],
        ['축척', s(L, 'M.7 7V.700h14.600v14.600H10', 1.300) + s(W, 'M.7 8h7.300v7.300H.700z', 1.300)],
        ['신축', s(W, 'M.7 1h6v14h-6zM4 11h6M8 9l2 2-2 2', 1.200) + s(L, 'M9 1h2l4.500 14H11', 1.200)],
        ['자르기', dash(L, 'M0 1.500h16', 1.200, '3 1') + s('#fff', 'M6 2l5 9M11 2L6 8', 1.800) + c('#fff', 5, 10, 2, 1.500) + c('#fff', 12, 13, 2, 1.500)],
        ['연장', s('#fff', 'M2 4.500h9M9 2l3 2.500L9 7', 1.3) + s(W, 'M15 1v12M0 11.500h5') + dash(L, 'M6 11.500h8')],
        ['점에서 끊기', s(W, 'M10 3.500H.700v10h14.600v-10H14', 1.300) + s(L, 'M12 1v5', 1.300)],
        ['끊기', s(W, 'M4 3.500H.700v10h14.600v-10H12', 1.300) + s(L, 'M6 1v5M10 1v5', 1.300)],
        ['결합', s(W, 'M0 8.500h4M12 8.500h4') + f(L, 'M3 6l5 2.500L3 11zM13 6L8 8.500l5 2.500z')],
        ['모따기', s(W, 'M1 16v-5M11 1h5', 1.200) + s(L, 'M2 11l9-9', 1.200)],
        ['모깎기', s(W, 'M1 16v-5M11 1h5', 1.200) + s(L, 'M1 11C1 5 5 1 11 1', 1.300)],
        ['곡선 혼합', s(W, 'M1 16c0-3 0-4 1-6M15 0c0 3 0 4-1 6', 1.300) + s(L, 'M2 8c3-5 5-2 6 1s4 4 6-1', 1.300)],
        ['3D 분해', s(L, 'M2 4l4-3.500h9.500V11l-4 4M6 1v3M12 4l3-3', 1.200) + s(W, 'M3 5.500h8v8H3z', 1.500) + s(L, 'M.7 3.500h11.500v12H.700z')]
    ]
};

document.querySelectorAll('[data-rows]').forEach(el => {
    el.innerHTML = rows[el.dataset.rows].map(([label, icon]) =>
        `<button class="flex h-6 items-center gap-[5px]">${svg(icon)}<span class="${label === 'LINE SHOP' ? 'text-[12px]' : ''}">${label}</span></button>`).join('');
});

document.querySelectorAll('[data-bar]').forEach(el => {
    const grip = '<div class="h-2 pt-[2px] pl-[3px]"><svg width="14" height="4"><path stroke="#c3c6cc" stroke-dasharray="1 1" d="M0 .5h14M0 3.500h14"/></svg></div>';
    el.innerHTML = grip + bars[el.dataset.bar].map(item => item === '-'
        ? '<div class="flex h-[6px] items-center"><div class="mx-[2px] h-[2px] flex-1 bg-[#e0e2e5]"></div></div>'
        : `<button aria-label="${item[0]}" class="flex h-[22px] w-full items-center pl-[3px]">${svg(item[1] + (item[2] ? FLY : ''))}</button>`).join('');
});

const menus = ['파일(F)', '편집(E)', '뷰(V)', '삽입(I)', '형식(O)', '도구(T)', '그리기(K)', '심볼(S)', '문자 (T)', '치수(N)', '수정(M)', '파라메트릭(P)', '조경(G)', 'XPress(X)', '윈도우(W)', '도움말(H)', 'BarShop'];
document.getElementById('menus').innerHTML = menus.map(m => `<a href="#">${m}</a>`).join('');

const tabs = ['홈', '삽입', '주석', '파라메트릭', '관리', '출력', '애드인', '공동 작업', '주요 응용프로그램', '건축', '조경'];
document.getElementById('ribbonTabs').innerHTML = tabs.map(m => `<a href="#" class="px-[10px] pb-1">${m}</a>`).join('')
    + '<a href="#" class="px-[10px] pb-1 text-[12px]">XPress</a><a href="#" class="px-[10px] pb-1 text-[12px]">Civil</a>'
    + '<a href="#" class="rounded-t-sm bg-[#3b4453] px-2 pt-px pb-1 text-[12px] text-white">BarShop</a>'
    + '<button aria-label="리본 최소화" class="ml-[22px] pb-[6px]"><svg width="25" height="8"><path fill="#f4f4f4" d="M0 0h15v8H0z"/><path fill="#444" d="M5 6h6L8 3z"/><path fill="#e8eaed" d="M19 3h5l-2.500 3z"/></svg></button>';

const arrow = f(W, 'M4 6h8l-4 5z');
// [label, icon, width class, active]
const groups = [
    [['모눈', s(W, 'M5 1v15M9 1v15M13 1v15M1 4.500h15M1 8.500h15M1 12.500h15'), 'w-[25px]'], ['스냅', dash('#fff', 'M2 3h13M2 8h13M2 13h13', 2, '2 3'), 'w-[22px]', 1], ['스냅 설정', arrow, 'w-[17px]']],
    [['직교', s('#fff', 'M2.500 0v14.500H16M2 9.500h5v5', 1.300), 'w-[23px]', 1], ['극좌표', c(W, 7, 9, 6, 1.300) + s(W, 'M7 9l6-6M7 9h9', 1.300), 'w-6'], ['극좌표 설정', arrow, 'w-4'], ['등각투영', s('#e05050', 'M1 1l6 6M9 9l6 6', 1.300) + s('#50c070', 'M8 0v6M8 10v6', 1.300) + c(W, 8, 8, 1.5), 'w-6'], ['등각 설정', arrow, 'w-4']],
    [['객체 스냅 추적', s(W, 'M15 2L2 14h14M7 10l3 1', 1.300) + dot(W, 9, 7), 'w-[25px]'], ['객체 스냅', s('#fff', 'M6 3.500h9.300v12H3V7', 1.300) + s('#fff', 'M.7 1.700h4.600v4H.700z', 1.300), 'w-[23px]', 1], ['객체 스냅 설정', arrow, 'w-[18px]']],
    [['주석 가시성', f('#fff', 'M7 0l2 5 1 6 5 5-7-3-7 3 5-5z') + c('#fff', 13, 3, 2), 'w-[22px]', 1], ['자동 축척', f(W, 'M7 0l2 5 1 6 5 5-7-3-7 3 5-5z') + s(W, 'M14 0l-2 4h3l-2 4'), 'w-[25px]'], ['주석 축척', f(W, 'M8 1l2 5 1 5 4 4-7-2-7 2 4-4 1-5z'), 'w-6'], ['1:1', null, 'w-6'], ['축척 목록', arrow, 'w-3']],
    [['작업공간', c(W, 8, 8, 4, 3) + dash(W, 'M8 1.500a6.500 6.500 0 100 13 6.500 6.500 0 000-13', 2, '3 2.100'), 'w-[22px]'], ['작업공간 목록', arrow, 'w-[18px]']],
    [['주석 감시', s('#e8eaed', 'M8 0v16M0 8h16', 1.800), 'w-[25px]']],
    [['객체 분리', s(W, 'M1 1h5v5H1zM6 15l3-5 3 5z', 1.300) + c(W, 13, 7, 2.500, 1.300), 'w-[25px]']],
    [['하드웨어 가속', f('#2a78b8', 'M1 1h9l4 4v7H1z') + s('#fff', 'M3 4h6M6 1v6') + f('#f0c030', 'M0 11h5v4H0z') + s('#60d080', 'M6 12l3 3 6-7', 2), 'w-6'], ['시스템 경고', f('#d8dadd', 'M0 2h15v11H0z') + s('#345', 'M1 8l3-3 3 4 4-5 3 3') + f('#f08030', 'M12 7l4 8H8z'), 'w-7']],
    [['화면 정리', s(W, 'M.7 2.700h14.600v10.600H.700zM4 10l2-2M4 7v3h3M12 6l-2 2M9 6h3v3', 1.200), 'w-[22px]'], ['사용자화', s('#e8eaed', 'M0 3h16M0 8h16M0 13h16', 1.500), 'w-6']]
];
document.getElementById('status').innerHTML =
    '<button class="w-[63px] bg-[#3b4453] text-[11px] text-white">ArchiOffice</button><button class="w-[27px] bg-[#3b4453] text-white">모형</button>'
    + groups.map(g => '<div class="flex bg-[#3b4453]">' + g.map(([label, icon, w, on]) =>
        `<button aria-label="${label}" class="flex items-center justify-center ${w} ${on ? 'bg-[#5f8fc4]' : ''}">${icon ? svg(icon, icon === arrow ? 14 : 18) : label}</button>`).join('') + '</div>').join('');
</script>
</body>
</html>
